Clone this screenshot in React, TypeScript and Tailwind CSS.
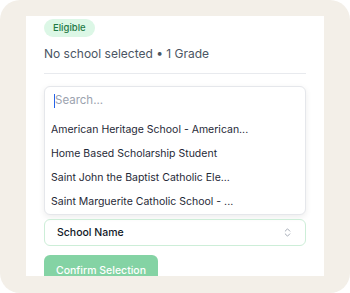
import { ChevronsUpDown } from "lucide-react";

const schools = [
  "American Heritage School - American...",
  "Home Based Scholarship Student",
  "Saint John the Baptist Catholic Ele...",
  "Saint Marguerite Catholic School - ...",
];

export default function App() {
  return (
    <div className="w-[350px] h-[293px] bg-white" style={{ fontFamily: "Inter, 'Noto Sans', sans-serif" }}>
      <div className="w-full h-full rounded-[20px] bg-[#f3efe8] pt-4 pb-[17px] px-[26px]">
        <div className="h-full bg-white overflow-hidden px-[18px] pt-[3px]">
          <div className="flex w-fit items-center h-[18px] px-[9px] rounded-full bg-[#dcf7e6] text-[9.5px] font-medium text-[#1f7a45]">
            Eligible
          </div>
          <p className="mt-[9px] text-[12px] leading-4 text-[#4b5563]">No school selected • 1 Grade</p>
          <div className="mt-[11px] h-px bg-[#e8eaee]" />

          <div className="mt-3 rounded-md border border-[#e5e7eb] bg-white shadow-[0_2px_6px_rgba(0,0,0,0.08)]">
            <div className="h-[28px] flex items-center px-[9px]">
              <span className="w-px h-[14px] bg-[#2563eb]" />
              <span className="text-[11.5px] text-[#9ca3af]">Search...</span>
            </div>
            <div className="pt-[3px]">
              {schools.map((s) => (
                <div key={s} className="h-6 flex items-center px-[6px] text-[10.5px] text-[#1f2937]">
                  {s}
                </div>
              ))}
            </div>
          </div>

          <div className="mt-1 h-[27px] rounded-md border border-[#cdeed8] flex items-center justify-between pl-[12px] pr-[12px]">
            <span className="text-[10.5px] font-medium text-[#111827]">School Name</span>
            <ChevronsUpDown size={11} className="text-[#9ca3af]" strokeWidth={2} />
          </div>

          <button className="mt-[9px] h-8 w-[114px] rounded-md bg-[#84d3a4] text-white text-[10.5px] font-medium">
            Confirm Selection
          </button>
        </div>
      </div>
    </div>
  );
}
